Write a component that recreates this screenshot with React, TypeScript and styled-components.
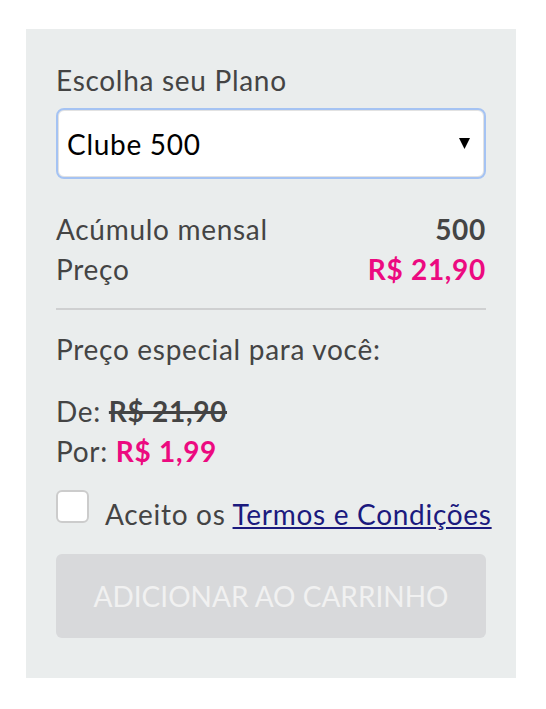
import React, { useState } from 'react';
import styled, { createGlobalStyle } from 'styled-components';

const GlobalStyle = createGlobalStyle`
  body {
    margin: 0;
    background: #ffffff;
    font-family: Lato, "Open Sans", sans-serif;
    color: #444444;
  }
`;

const Panel = styled.div`
  margin: 29px 0 0 26px;
  width: 490px;
  box-sizing: border-box;
  padding: 31px 30px 40px;
  background: #eaeded;
  font-size: 28px;
  line-height: 40px;
  letter-spacing: 0.7px;
`;

const Label = styled.div`
  color: #444;
`;

const SelectBox = styled.div`
  position: relative;
  margin: 10px 2px 0;
  height: 67px;
  box-sizing: border-box;
  display: flex;
  align-items: center;
  padding: 0 8px;
  background: #fff;
  border: 1px solid #e2e2e2;
  border-radius: 6px;
  outline: 2px solid #a5c3f3;
  color: #000;
`;

const SelectValue = styled.span`
  flex: 1;
`;

const Arrow = styled.svg`
  width: 11px;
  height: 11px;
  margin-right: 5px;
`;

const Rows = styled.div`
  margin-top: 32px;
`;

const Row = styled.div`
  display: flex;
  justify-content: space-between;
`;

const Value = styled.span<{ $pink?: boolean }>`
  font-weight: 700;
  color: ${({ $pink }) => ($pink ? '#ec0a80' : '#444')};
`;

const Divider = styled.hr`
  margin: 19px 0 19px;
  border: 0;
  height: 2px;
  background: #cfd0d1;
`;

const Offer = styled.div`
  margin-top: 22px;
`;

const OldPrice = styled.span`
  font-weight: 700;
  text-decoration: line-through;
  text-decoration-thickness: 3px;
`;

const Terms = styled.label`
  display: flex;
  align-items: flex-start;
  gap: 16px;
  margin-top: 19px;
  cursor: pointer;
`;

const Box = styled.span<{ $checked: boolean }>`
  flex: none;
  width: 33px;
  height: 33px;
  box-sizing: border-box;
  border: 2px solid #cccccc;
  border-radius: 6px;
  background: ${({ $checked }) => ($checked ? '#ec0a80' : '#fff')};
`;

const TermsText = styled.span`
  margin-top: 4px;
  white-space: nowrap;
`;

const TermsLink = styled.a`
  color: #1b1a7e;
  text-decoration: underline;
`;

const CartButton = styled.button`
  display: block;
  width: 100%;
  height: 84px;
  margin-top: 20px;
  border: 0;
  border-radius: 6px;
  background: #d8d9db;
  color: #f1f1f1;
  font-family: inherit;
  font-size: 28px;
  letter-spacing: 0;
  text-transform: uppercase;
`;

export default function App() {
  const [accepted, setAccepted] = useState(false);

  return (
    <>
      <GlobalStyle />
      <Panel>
        <Label>Escolha seu Plano</Label>
        <SelectBox>
          <SelectValue>Clube 500</SelectValue>
          <Arrow viewBox="0 0 10 10">
            <path d="M0 0 H10 L5 10 Z" fill="#000" />
          </Arrow>
        </SelectBox>

        <Rows>
          <Row>
            <span>Acúmulo mensal</span>
            <Value>500</Value>
          </Row>
          <Row>
            <span>Preço</span>
            <Value $pink>R$ 21,90</Value>
          </Row>
        </Rows>

        <Divider />

        <div>Preço especial para você:</div>

        <Offer>
          <div>
            De: <OldPrice>R$ 21,90</OldPrice>
          </div>
          <div>
            Por: <Value $pink>R$ 1,99</Value>
          </div>
        </Offer>

        <Terms onClick={() => setAccepted(!accepted)}>
          <Box $checked={accepted} />
          <TermsText>
            Aceito os <TermsLink href="#">Termos e Condições</TermsLink>
          </TermsText>
        </Terms>

        <CartButton disabled={!accepted}>Adicionar ao carrinho</CartButton>
      </Panel>
    </>
  );
}
